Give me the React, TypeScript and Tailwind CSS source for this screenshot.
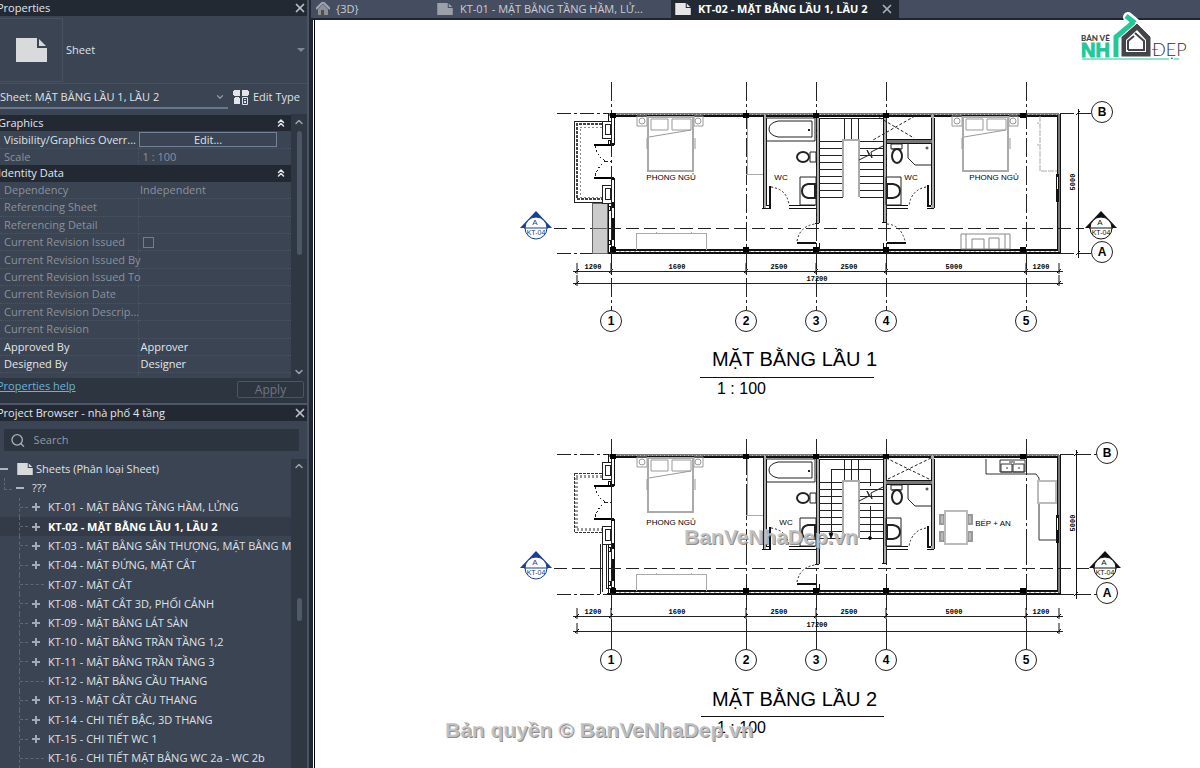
import { ChevronDown, ChevronsUp, ChevronUp, Search, X } from "lucide-react";

const ROWS = [
  { label: "Referencing Sheet" },
  { label: "Referencing Detail" },
  { label: "Current Revision Issued", check: true },
  { label: "Current Revision Issued By" },
  { label: "Current Revision Issued To" },
  { label: "Current Revision Date" },
  { label: "Current Revision Descrip..." },
  { label: "Current Revision" },
  { label: "Approved By", value: "Approver", editable: true },
  { label: "Designed By", value: "Designer", editable: true },
  { label: "Checked By", value: "Checker", editable: true },
];

const SHEETS = [
  { name: "KT-01 - MẶT BẰNG TẦNG HẦM, LỬNG", open: true },
  { name: "KT-02 - MẶT BẰNG LẦU 1, LẦU 2", open: true, active: true },
  { name: "KT-03 - MẶT BẰNG SÂN THƯỢNG, MẶT BẰNG MÁI", open: true },
  { name: "KT-04 - MẶT ĐỨNG, MẶT CẮT", open: true },
  { name: "KT-07 - MẶT CẮT" },
  { name: "KT-08 - MẶT CẮT 3D, PHỐI CẢNH", open: true },
  { name: "KT-09 - MẶT BẰNG LÁT SÀN", open: true },
  { name: "KT-10 - MẶT BẰNG TRẦN TẦNG 1,2", open: true },
  { name: "KT-11 - MẶT BẰNG TRẦN TẦNG 3", open: true },
  { name: "KT-12 - MẶT BẰNG CẦU THANG" },
  { name: "KT-13 - MẶT CẮT CẦU THANG", open: true },
  { name: "KT-14 - CHI TIẾT BẬC, 3D THANG", open: true },
  { name: "KT-15 - CHI TIẾT WC 1", open: true },
  { name: "KT-16 - CHI TIẾT MẶT BẰNG WC 2a - WC 2b" },
];

const GRID = [611, 746, 816, 886, 1026];

function SheetIcon({ className }: { className?: string }) {
  return (
    <svg viewBox="0 0 31 24" className={className} fill="currentColor" aria-hidden="true">
      <path d="M0 0h21v10h10v14H0z" />
      <path d="M23 1v7h7z" />
    </svg>
  );
}

function TitleBar({ title }: { title: string }) {
  return (
    <div className="flex h-4 shrink-0 items-center justify-between bg-[#222933] text-[#e3e6ea]">
      <h2 className="-ml-[3px] whitespace-nowrap">{title}</h2>
      <button aria-label={`Close ${title}`}><X size={14} strokeWidth={3} className="text-[#b9bfc8]" /></button>
    </div>
  );
}

function GroupHeader({ title }: { title: string }) {
  return (
    <tr className="bg-[#222933] text-[#e3e6ea]">
      <th colSpan={2} className="p-0 text-left font-normal">
        <div className="flex items-center justify-between pr-1">
          <span className="-ml-[2px]">{title}</span>
          <ChevronsUp size={12} strokeWidth={3} />
        </div>
      </th>
    </tr>
  );
}

function Properties() {
  return (
    <section className="flex flex-col">
      <TitleBar title="Properties" />
      <div className="flex h-[68px] items-center border-b border-[#465061] pr-[2px]">
        <div className="flex h-[64px] w-[63px] items-center justify-center border border-l-0 border-[#475162]">
          <SheetIcon className="h-6 w-[31px] text-[#d9dadc]" />
        </div>
        <span className="ml-[3px] flex-1">Sheet</span>
        <svg viewBox="0 0 8 4" className="h-1 w-2" fill="#7b8696"><path d="M0 0h8L4 4z" /></svg>
      </div>
      <div className="flex h-[30px] items-start pt-[2px]">
        <div className="relative w-[228px] border-b-2 border-[#65768d]">
          <select aria-label="Sheet instance" className="h-[21px] w-full appearance-none bg-transparent outline-none">
            <option>Sheet: MẶT BẰNG LẦU 1, LẦU 2</option>
          </select>
          <ChevronDown size={10} className="absolute right-[3px] top-[6px] text-[#8d98a8]" strokeWidth={3} />
        </div>
        <button className="ml-[5px] flex h-[22px] items-center gap-1 whitespace-nowrap">
          <svg viewBox="0 0 16 16" className="h-4 w-4" fill="#e3e5e8">
            <path d="M1 1h6v6H1zM9 1h6v6H9zM1 9h6v6H1z" />
            <path d="M0 2h1v4H0zM15 2h1v4h-1zM2 8h4v1H2z" />
            <path d="M9.500 8.500h5v7h-5z" fill="#33445c" stroke="#dfe3e8" />
            <path d="M11 10h2v1h-2zM11 12h2v2h-2z" />
          </svg>
          Edit Type
        </button>
      </div>
      <div className="flex h-[264px] overflow-hidden">
        <div className="min-w-0 flex-1 pt-px">
          <table className="h-[275px] w-full table-fixed border-collapse leading-4">
            <colgroup>
              <col className="w-[138px]" />
              <col />
            </colgroup>
            <tbody>
              <GroupHeader title="Graphics" />
              <tr>
                <td className="whitespace-nowrap p-0 pl-1">Visibility/Graphics Overr...</td>
                <td className="p-0 pr-[15px]">
                  <button className="mx-px block h-[15px] w-full border border-[#75839a] leading-[13px]">Edit...</button>
                </td>
              </tr>
              <tr className="border-t border-dotted border-[#4a5465] text-[#8a919c]">
                <td className="p-0 pl-1">Scale</td>
                <td className="border-l border-dotted border-[#4a5465] p-0 pl-1">1 : 100</td>
              </tr>
              <GroupHeader title="Identity Data" />
              <tr className="text-[#8a919c]">
                <td className="p-0 pl-1">Dependency</td>
                <td className="p-0 pl-[2px]">Independent</td>
              </tr>
              {ROWS.map(r => (
                <tr key={r.label} className={r.editable ? "border-t border-dotted border-[#4a5465] text-[#e3e6ea]" : "border-t border-dotted border-[#4a5465] text-[#8a919c]"}>
                  <td className="whitespace-nowrap border-r border-dotted border-[#4a5465] p-0 pl-1">{r.label}</td>
                  <td className="p-0 pl-[2px]">
                    {r.check && <input type="checkbox" aria-label={r.label} className="ml-[2px] block size-[11px] appearance-none border border-[#737d8c]" />}
                    {r.value}
                  </td>
                </tr>
              ))}
            </tbody>
          </table>
        </div>
        <div className="flex w-4 flex-col items-center justify-between bg-[#2f3742] text-[#9aa3b0]">
          <div className="flex flex-col items-center">
            <ChevronUp size={12} strokeWidth={3} className="my-[2px]" />
            <div className="mt-px h-[124px] w-[5px] rounded-full bg-[#4b5666]" />
          </div>
          <ChevronDown size={12} strokeWidth={3} />
        </div>
      </div>
      <div className="flex h-[27px] items-start justify-between border-b-2 border-[#4d5869] bg-[#2d3541] pr-[3px]">
        <a href="#help" className="-ml-[3px] text-[#64b4dc] underline">Properties help</a>
        <button disabled className="mt-[3px] h-[17px] w-[67px] rounded-xs border border-[#4b5564] text-[12px] leading-[15px] text-[#6d7684]">Apply</button>
      </div>
    </section>
  );
}

function Browser() {
  return (
    <section className="flex min-h-0 flex-1 flex-col">
      <TitleBar title="Project Browser - nhà phố 4 tầng" />
      <label className="mx-1 mb-2 mr-2 mt-2 flex h-[22px] shrink-0 items-center gap-2 bg-[#2c3440] pl-[6px] text-[#aab1bb]">
        <Search size={17} strokeWidth={2} />
        <input placeholder="Search" aria-label="Search sheets" className="w-full bg-transparent outline-none placeholder:text-[#929aa6]" />
      </label>
      <div className="flex min-h-0 flex-1">
        <ul className="flex min-w-0 flex-1 flex-col overflow-hidden whitespace-nowrap">
          <li className="flex flex-1 items-center">
            <span className="h-[2px] w-2 bg-[#aeb5bf]" />
            <SheetIcon className="ml-[9px] mr-[3px] h-3 w-4 text-[#d9dadc]" />
            Sheets (Phân loại Sheet)
          </li>
          <li className="flex flex-1 items-center">
            <span className="ml-1 h-3 w-2 -translate-y-1 border-b border-l border-dashed border-[#5c6778]" />
            <span className="ml-1 mr-2 h-[2px] w-2 bg-[#aeb5bf]" />
            ???
          </li>
          {SHEETS.map(s => (
            <li key={s.name} className={s.active ? "flex flex-1 items-center bg-[#333b48] font-bold text-white" : "flex flex-1 items-center font-medium"}>
              <span className="ml-[19px] h-full shrink-0 border-l border-dashed border-[#5c6778]" />
              <span className={s.open ? "w-2 shrink-0 border-t border-dashed border-[#5c6778]" : "mr-1 w-6 shrink-0 border-t border-dashed border-[#5c6778]"} />
              {s.open && (
                <svg viewBox="0 0 8 8" className="ml-1 mr-2 h-2 w-2 shrink-0"><path d="M0 4h8M4 0v8" stroke="#a3aab5" strokeWidth="2" /></svg>
              )}
              {s.name}
            </li>
          ))}
        </ul>
        <div className="flex w-4 shrink-0 flex-col items-center bg-[#2f3742] text-[#9aa3b0]">
          <ChevronUp size={12} strokeWidth={3} className="mt-px" />
          <div className="mt-[126px] h-[23px] w-[5px] rounded-full bg-[#4e5969]" />
        </div>
      </div>
    </section>
  );
}

function Tabs() {
  return (
    <nav className="flex h-5 shrink-0 items-center border-b-2 border-[#20262f] bg-[#454d61] font-medium text-[#c9ced6]">
      <button className="flex w-[126px] items-center gap-[6px] pl-[5px]">
        <svg viewBox="0 0 14 14" className="size-[14px]">
          <path d="M2 7l5-5 5 5v6H2z" fill="#8b8f96" />
          <path d="M0 7l7-7 7 7" stroke="#a2a6ad" strokeWidth="2" fill="none" />
          <path d="M5 8h3v6H5z" fill="#5a4a3f" />
        </svg>
        {"{3D}"}
      </button>
      <button className="flex w-[234px] items-center gap-[7px] whitespace-nowrap">
        <SheetIcon className="h-3 w-4 text-[#9ca0a8]" />
        KT-01 - MẶT BẰNG TẦNG HẦM, LỬ...
      </button>
      <div className="flex h-full items-center gap-3 bg-[#222933] pl-1 pr-[5px] font-bold text-white">
        <button className="flex items-center gap-[7px] whitespace-nowrap">
          <SheetIcon className="h-3 w-4 text-[#e6e6e8]" />
          KT-02 - MẶT BẰNG LẦU 1, LẦU 2
        </button>
        <button aria-label="Close tab"><X size={14} strokeWidth={3} className="text-[#a7adb7]" /></button>
      </div>
    </nav>
  );
}

function Bed({ x }: { x: number }) {
  return (
    <g transform={`translate(${x} 0)`} fill="none" stroke="#999">
      <path d="M637 116h10v10h-10zM694 116h9v10h-9z" />
      <circle cx="642" cy="121" r="3" />
      <circle cx="698" cy="121" r="3" />
      <path d="M648 117h45v54h-45z" stroke="#aaa" strokeWidth="2" />
      <path d="M651 119h17v11h-17zM672 119h19v11h-19zM649 137l42-7M647 138v11M695 138v11" />
    </g>
  );
}

function Marker({ x, y, color }: { x: number; y: number; color: string }) {
  return (
    <g fill={color}>
      <path d={`M${x - 16} ${y}L${x} ${y - 17}L${x + 16} ${y}z`} />
      <circle cx={x} cy={y} r="11" fill="#fff" stroke={color} />
      <path d={`M${x - 12} ${y}h24`} stroke={color} />
      <text x={x - 1} y={y - 3} fontSize="8" textAnchor="middle">A</text>
      <text x={x} y={y + 7} fontSize="7" textAnchor="middle">KT-04</text>
    </g>
  );
}

function Bubble({ x, y, label }: { x: number; y: number; label: string }) {
  return (
    <g>
      <circle cx={x} cy={y} r="10.500" fill="#fff" stroke="#222" />
      <text x={x} y={y + 4} fontSize="12" fontWeight="700" textAnchor="middle">{label}</text>
    </g>
  );
}

// y values are those of the first floor, the upper plan on the sheet
function FloorPlan({ upper }: { upper: boolean }) {
  const dy = upper ? 4 : 0;
  const dy2 = upper ? 7 : 0;
  const bubbleY = upper ? 319 : 321;
  const markY = upper ? 227 : 228;
  const right = upper ? 1107 : 1102;
  return (
    <g transform={upper ? "translate(0 341)" : undefined}>
      {/* walls */}
      <g shapeRendering="crispEdges" fill="none" stroke="#111">
        <path d="M608 114h451" stroke="#777" strokeWidth="3" />
        <path d="M608 114h451" stroke="#bbb" strokeDasharray="1 3" />
        <path d="M610 116h449M614 250h443" strokeWidth="2" />
        <path d="M607 253h453" strokeWidth="2" />
        <path d="M614 251h443" stroke="#aaa" strokeDasharray="2 3" />
        <path d="M1059 114v138" stroke="#777" strokeWidth="3" />
        <path d="M1057 116v135M1060 113v141" />
        <path d="M1057 174v28" strokeWidth="3" />
        <path d="M1057 177v12" stroke="#fff" />
        <path d="M611 116v29M614 116v29M611 178v73M614 178v73" />
        <path d="M612 144h2M612 178h2M612 202v6M612 218v22M612 246v5" strokeWidth="3" />
        <path d="M608 113v8M608 203v50M608 140h2v4h-2zM608 206h2v4h-2zM608 240h2v4h-2z" />
        <path d="M764 115v93M817 115v108M884 115v107M932 115v93" stroke="#aaa" strokeWidth="3" />
        <path d="M763 115v93M766 118v87h5M816 118v105M819 118v105M883 118v104M886 118v104M931 118v87M934 118v90" />
        <path d="M762 208h9M789 205h26M789 208h27M886 205h22M886 208h22M927 208h7" />
        <path d="M770 186v22M928 185v22M927 206h4" strokeWidth="2" />
        <path d="M886 141h46" stroke="#777" strokeWidth="3" />
        <path d="M886 143h46M886 139h46" />
        <path d="M797 243h19" strokeWidth="2" />
        <path d="M816 243v8M819 243v8M815 223h4M882 222h4" />
        {!upper && <path d="M883 243v8M886 243v8" />}
      </g>
      {/* gridlines */}
      <g stroke="#222" fill="none" shapeRendering="crispEdges">
        {GRID.map(x => (
          <path key={x} d={`M${x} ${upper ? 98 : 82}V${bubbleY - 11}`} strokeDasharray={upper ? "36 3 3 3" : "19 3 3 3"} />
        ))}
        <path d="M557 113h51" strokeDasharray="14 3 3 3" />
        <path d="M557 253h51" strokeDasharray="14 3 3 3" />
        <path d={`M1060 113H${right - 10}M1060 253H${right - 10}`} strokeDasharray="14 3" />
        <path d={`M554 ${markY}H${right - 18}`} strokeDasharray="13 5" />
      </g>
      {/* columns */}
      {[610, 743, 813, 883, 1020].map(x => (
        <g key={x} fill="#000">
          <rect x={x} y="113" width="6" height="5" />
          <rect x={x} y="247" width="6" height="5" />
        </g>
      ))}
      {/* balcony */}
      <g fill="none" stroke="#222" shapeRendering="crispEdges">
        {upper ? (
          <>
            <path d="M602 132h-28v59h28" stroke="#333" strokeDasharray="3 1" />
            <path d="M602 135h-26v53h26" stroke="#999" strokeDasharray="2 2" strokeWidth="3" />
            <path d="M600 203v50M602 203v48M606 203v44h5" />
          </>
        ) : (
          <>
            <path d="M602 121h-28v81h28" />
            <path d="M602 124h-25v75h25" stroke="#444" strokeWidth="2" strokeDasharray="3 1" />
            <path d="M602 127h-22v70h22" stroke="#888" strokeDasharray="2 2" />
            <path d="M592 203h15v50h-15zM592 228h15" fill="#ccc" stroke="#666" />
          </>
        )}
        <path d="M602 121h9v17h-9zM605 124h5v10h-5zM602 185h9v18h-9zM605 188h5v11h-5z" />
        <path d="M594 145h17M594 178h17" strokeWidth="2" stroke="#000" />
        <path d="M595 146q3 12 11 15q-8 4-11 16M606 161h5" strokeDasharray="2 2" />
      </g>
      <Bed x={0} />
      <path d="M636 250v-17h70v17M656 233v-1M691 233v-1M746 174h17M747 118v56" fill="none" stroke="#aaa" shapeRendering="crispEdges" />
      {/* bathrooms */}
      <g fill="none" stroke="#222">
        <path d="M766 118h49v23h-49M812 121h-34q-9 2-9 8t9 8h34z" />
        <path d="M808 130h2" strokeWidth="2" />
        <ellipse cx="803" cy="157" rx="6" ry="5" strokeWidth="2" />
        <path d="M810 152h6v10h-6zM800 177h16v28h-16z" />
        <path d="M815 184h-7q-6 1-6 7t6 7h7z" strokeWidth="2" />
        <path d="M771 187q16 2 18 18M797 241q3-15 18-17M926 187q-15 3-17 19" strokeDasharray="2 2" />
        <path d="M891 144h11v5h-11zM892 149h9" />
        <ellipse cx="897" cy="156" rx="5" ry="7" strokeWidth="2" />
        <path d="M908 143v15l7 7h16M886 177h15v28h-15z" />
        <circle cx="927" cy="148" r="1" />
        <path d="M887 184h6q7 1 7 7t-7 7h-6z" strokeWidth="2" />
        <path d={upper ? "M886 117l45 22M931 117l-45 22" : "M875 115l39 23M915 116l-42 24"} strokeDasharray="3 2" />
      </g>
      {/* stair */}
      <g fill="none" stroke="#222" shapeRendering="crispEdges">
        <path d="M819 118h64M819 141h25M857 141h26M844 118v21M851 118v21M858 118v21" />
        {[148, 155, 162, 169, 176, 183, 190, 197].map(y => (
          <path key={y} d={`M819 ${y}h24M860 ${y}h23`} />
        ))}
      </g>
      <path d="M843 197v-57h16v57" fill="#fff" stroke="#aaa" strokeWidth="2" />
      <path d="M859 160l10-5-2-5 5 8-1-6 12-6" fill="none" stroke="#222" />
      {upper && (
        <g stroke="#222" fill="none">
          <path d="M831 195v-67h39v17M870 165v32" shapeRendering="crispEdges" />
          <path d="M829 192h4l-2 5z" fill="#000" />
          <circle cx="870" cy="197" r="1.500" fill="#000" />
        </g>
      )}
      {/* rear room */}
      {upper ? (
        <>
          <g fill="none" stroke="#333">
            <path d="M986 118v15h50l3 4v62h17" />
            <path d="M1000 119h25v12h-25z" />
            <path d="M1001 123h11v8h-11zM1013 123h11v8h-11z" strokeWidth="1" />
            <path d="M1006 127h2M1018 127h2M1009 121h6" />
          </g>
          <g fill="#fff" stroke="#999" strokeWidth="2">
            <path d="M1038 140h18v22h-18z" stroke="#bbb" />
            <path d="M940 174h4v9h-4zM940 191h4v9h-4zM968 174h4v9h-4zM968 191h4v9h-4z" fill="#bbb" />
            <path d="M945 170h22v33h-22z" stroke="#bbb" />
          </g>
          <text x="993" y="185" fontSize="8" textAnchor="middle">BẾP + AN</text>
        </>
      ) : (
        <>
          <Bed x={315} />
          <path d="M1040 116v55h17M1038 122v2M1038 144v2" fill="none" stroke="#aaa" strokeDasharray="6 1" />
          <path d="M961 234h49v15h-49zM966 234v15M1005 234v15M972 249v-10h12v10M989 249v-11h10v11" fill="none" stroke="#888" />
          <path d="M887 243h19" stroke="#111" strokeWidth="2" />
          <path d="M887 224q14 1 18 17" fill="none" stroke="#333" strokeDasharray="2 2" />
          <text x="911" y="180" fontSize="8" textAnchor="middle">WC</text>
          <text x="994" y="180" fontSize="8" textAnchor="middle">PHONG NGỦ</text>
        </>
      )}
      <text x="671" y={upper ? 184 : 180} fontSize="8" textAnchor="middle">PHONG NGỦ</text>
      <text x={upper ? 786 : 781} y={upper ? 184 : 180} fontSize="8" textAnchor="middle">WC</text>
      {/* dimensions */}
      <g transform={`translate(0 ${dy})`}>
        <path d="M573 271h490" stroke="#222" shapeRendering="crispEdges" />
        {[577, ...GRID, 1059].map(x => (
          <path key={x} d={`M${x} 263v11M${x - 2} 273l4-4`} stroke="#111" />
        ))}
      </g>
      <g transform={`translate(0 ${dy2})`}>
        <path d="M573 283h490" stroke="#222" shapeRendering="crispEdges" />
        <path d="M577 275v11M575 285l4-4M1059 275v11M1057 285l4-4" stroke="#111" />
      </g>
      <g fontSize="7" fontWeight="700" textAnchor="middle" className="font-['Liberation_Mono',monospace]">
        <text x="593" y={269 + dy}>1200</text>
        <text x="677" y={269 + dy}>1600</text>
        <text x="779" y={269 + dy}>2500</text>
        <text x="849" y={269 + dy}>2500</text>
        <text x="954" y={269 + dy}>5000</text>
        <text x="1041" y={269 + dy}>1200</text>
        <text x="817" y={281 + (upper ? 5 : 0)}>17200</text>
        <text transform="translate(1075 182) rotate(-90)">5000</text>
      </g>
      <path d={`M${upper ? 1076 : 1078} 109v149`} stroke="#111" shapeRendering="crispEdges" />
      <path d={`M${upper ? 1074 : 1076} 115l4-4M${upper ? 1074 : 1076} 255l4-4`} stroke="#111" />
      {GRID.map((x, i) => <Bubble key={x} x={x} y={bubbleY} label={String(i + 1)} />)}
      <Marker x={536} y={markY} color="#163f96" />
      <Marker x={upper ? 1105 : 1101} y={markY} color="#111" />
      <Bubble x={right} y={112} label="B" />
      <Bubble x={right} y={252} label="A" />
    </g>
  );
}

function Watermark({ x, y, children }: { x: number; y: number; children: string }) {
  return (
    <text x={x} y={y} fontSize="21" fontWeight="700" fill="#c4c4c4" fillOpacity="0.9" className="[text-shadow:1px_1px_0_#808080]">{children}</text>
  );
}

function Drawing() {
  return (
    <svg viewBox="315 20 885 748" className="min-h-0 w-full flex-1 bg-white font-['Liberation_Sans',Arial,sans-serif]" role="img" aria-label="Floor plans">
      <FloorPlan upper={false} />
      <FloorPlan upper />
      <text x="712" y="366" fontSize="20">MẶT BẰNG LẦU 1</text>
      <path d="M700 377h174M701 716h183" stroke="#111" shapeRendering="crispEdges" />
      <text x="717" y="394" fontSize="16">1 : 100</text>
      <text x="712" y="706" fontSize="20">MẶT BẰNG LẦU 2</text>
      <text x="717" y="733" fontSize="16">1 : 100</text>
      <Watermark x={684} y={544}>BanVeNhaDep.vn</Watermark>
      <Watermark x={445} y={737}>Bản quyền © BanVeNhaDep.vn</Watermark>
    </svg>
  );
}

function Logo() {
  return (
    <svg viewBox="1075 8 120 56" className="absolute right-[5px] top-2 h-14 w-[120px]" role="img" aria-label="Bản vẽ nhà đẹp">
      <path d="M1116 38l17-15M1128 17l7 6" fill="none" stroke="#fff" strokeWidth="10" strokeLinejoin="round" strokeLinecap="round" />
      <path d="M1116 57V37l18-15" fill="none" stroke="#20c997" strokeWidth="5" />
      <path d="M1126 16l9 7" fill="none" stroke="#20c997" strokeWidth="5" />
      <path d="M1121 57V37l16-14 14 14v20z" fill="#454549" stroke="#fff" />
      <path d="M1126 52V40l11-10 9 10v12z" fill="#fff" />
      <path d="M1128 50v-9l6-5M1135 33l9 8v9h-16" fill="none" stroke="#454549" strokeWidth="2" />
      <text x="1081" y="41" fontSize="8" fontWeight="900" fill="#454549" className="font-['Lato',sans-serif]">BẢN VẼ</text>
      <text x="1081" y="57" fontSize="20" fontWeight="700" fill="#20c997" stroke="#20c997" className="font-['Liberation_Sans',sans-serif]">NH</text>
      <text x="1152" y="56" fontSize="18" fontWeight="300" fill="#333" className="font-['Lato',sans-serif]">ĐẸP</text>
      <path d="M1082 59h87M1174 59h5" stroke="#20c997" />
    </svg>
  );
}

export default function App() {
  return (
    <div className="relative flex h-screen overflow-hidden bg-[#222933] font-['Open_Sans','Noto_Sans',sans-serif] text-[11px] leading-4 text-[#dfe2e6]">
      <aside className="flex w-[309px] shrink-0 flex-col border-r-2 border-[#4a5364] bg-[#3b4453]">
        <Properties />
        <Browser />
      </aside>
      <main className="ml-[2px] flex min-w-0 flex-1 flex-col">
        <Tabs />
        <div className="ml-[2px] flex min-h-0 flex-1 border-l border-white">
          <div className="flex min-w-0 flex-1 border-l border-black">
            <Drawing />
          </div>
        </div>
      </main>
      <Logo />
    </div>
  );
}
